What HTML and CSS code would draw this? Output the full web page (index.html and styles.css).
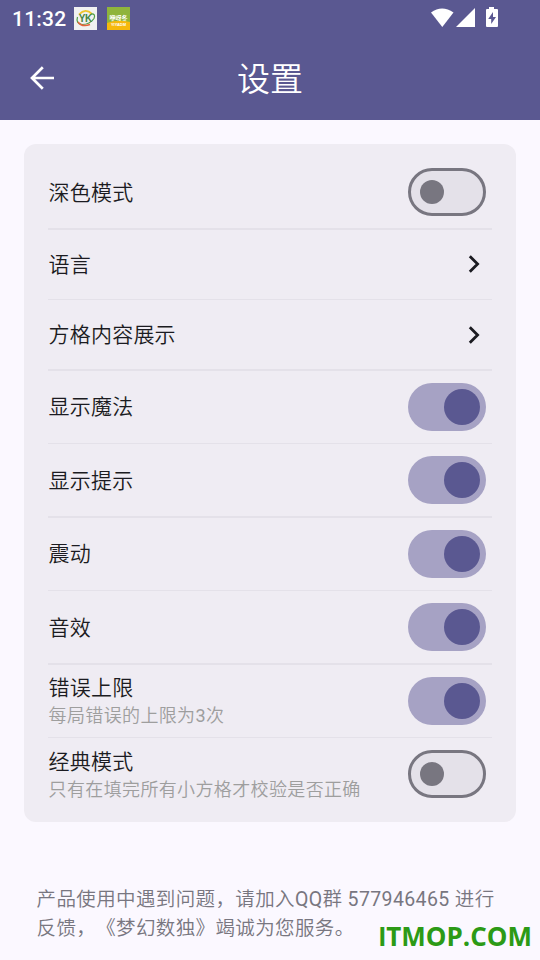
FILE: index.html
```html
<!DOCTYPE html>
<html lang="zh-CN">
<head>
<meta charset="utf-8">
<title>设置</title>
<link rel="stylesheet" href="styles.css">
</head>
<body>
<header class="top">
  <div class="status">
    <span class="clock">11:32</span>
    <svg class="app-icon" viewBox="0 0 23 23">
      <rect width="23" height="23" fill="#f1f1f1"/>
      <path d="M5 7.500Q11.500 .5 18 7" fill="none" stroke="#efc52b" stroke-width="1.800"/>
      <path d="M17 7Q22 6.500 20 11.500Q16 17.500 8 17.500Q1.500 16.500 3.500 10" fill="none" stroke="#4d9c43" stroke-width="1.200"/>
      <path d="M4 15Q8 20.500 16 17.500" fill="none" stroke="#e5633a" stroke-width="1.500"/>
      <text x="11.300" y="15" text-anchor="middle" class="yk-text">YK</text>
    </svg>
    <svg class="app-icon" viewBox="0 0 23 23">
      <rect width="23" height="23" fill="#8fb43c"/>
      <path d="M0 16Q10 12 23 15V23H0Z" fill="#f6b90c"/>
      <text x="11.500" y="13" text-anchor="middle" class="game-text">咿呀冬</text>
      <text x="11.500" y="19" text-anchor="middle" class="game-sub">YIYADM</text>
    </svg>
    <svg class="signals" viewBox="0 0 68 20" width="68" height="20">
      <path d="M0 4.600Q11 -3.600 22.500 4.600L11.300 19Z" fill="#fff"/>
      <path d="M44 0V19H25Z" fill="#fff"/>
      <path d="M58 -1h5v2h3q1 0 1 1V18q0 1-1 1h-10q-1 0-1-1V2q0-1 1-1h2Z" fill="#fff"/>
      <path d="M62 4L57.200 11h3v5l4.800-7h-3Z" fill="#5a5891"/>
    </svg>
  </div>
  <div class="bar">
    <svg class="back" viewBox="0 0 24 24"><path d="M24 12H2M12.800 1.200L2 12l10.800 10.800" fill="none" stroke="#fff" stroke-width="2.700"/></svg>
    <h1>设置</h1>
  </div>
</header>
<main class="card">
  <div class="row"><div class="label">深色模式</div><span class="switch"></span></div>
  <div class="row link"><div class="label">语言</div><svg class="chevron" viewBox="0 0 12 18"><path d="M1.800 1.200L9.600 9l-7.800 7.800" /></svg></div>
  <div class="row link"><div class="label">方格内容展示</div><svg class="chevron" viewBox="0 0 12 18"><path d="M1.800 1.200L9.600 9l-7.800 7.800" /></svg></div>
  <div class="row"><div class="label">显示魔法</div><span class="switch on"></span></div>
  <div class="row"><div class="label">显示提示</div><span class="switch on"></span></div>
  <div class="row"><div class="label">震动</div><span class="switch on"></span></div>
  <div class="row"><div class="label">音效</div><span class="switch on"></span></div>
  <div class="row"><div class="label">错误上限<p class="hint">每局错误的上限为<span class="latin">3</span>次</p></div><span class="switch on"></span></div>
  <div class="row"><div class="label">经典模式<p class="hint">只有在填完所有小方格才校验是否正确</p></div><span class="switch"></span></div>
</main>
<footer class="note">产品使用中遇到问题，请加入<span class="latin">QQ</span>群 <span class="latin">577946465</span> 进行<br>反馈，《梦幻数独》竭诚为您服务。</footer>
<div class="watermark"><span class="bar-i">I</span>TMOP.COM</div>
</body>
</html>
```

FILE: styles.css
```css
* { box-sizing: border-box; }

body {
  margin: 0;
  width: 540px;
  height: 960px;
  overflow: hidden;
  position: relative;
  background: #fbf8ff;
  color: #1b1b21;
  font-family: Roboto, "Noto Sans CJK SC", sans-serif;
  text-spacing-trim: space-all;
}

.top { height: 120px; background: #5a5891; color: #fff; }

.status { height: 36px; display: flex; align-items: center; padding: 0 41px 0 12px; }

.clock { width: 62px; font-size: 21px; font-weight: 500; letter-spacing: 0.2px; line-height: 36px; padding-top: 1px; }

.app-icon { width: 23px; height: 23px; margin-right: 10px; }

.yk-text { font: bold 10px "Liberation Sans", sans-serif; fill: #46863f; letter-spacing: -0.5px; }

.game-text { font: bold 6px "Noto Sans CJK SC", sans-serif; fill: #fff; }

.game-sub { font: bold 4px "Liberation Sans", sans-serif; fill: #fff; }

.signals { margin-left: auto; overflow: visible; }

.bar { height: 84px; display: grid; grid-template-columns: 60px 1fr 60px; align-items: center; }

.back { width: 24px; height: 24px; margin-left: 30px; }

h1 { margin: 0; padding-top: 3px; text-align: center; font-size: 33px; font-weight: 350; line-height: 48px; }

.card { margin: 24px 24px 0; height: 678px; padding: 12px 24px; background: #efecf3; border-radius: 12px; }

.row {
  height: 73.5px;
  display: flex;
  align-items: center;
  justify-content: space-between;
  padding: 0 6px 1.5px 0.6px;
  position: relative;
}

.row:not(:last-child)::after {
  content: "";
  position: absolute;
  left: 0;
  right: 0;
  bottom: 0;
  height: 1.5px;
  background: #e4e1e9;
}

.link { height: 70.5px; padding-right: 12px; }

.row:last-child { height: 72px; padding-bottom: 0; }

.label { font-size: 21px; font-weight: 350; letter-spacing: 0.2px; line-height: 30px; padding-top: 1px; }

.hint { margin: 0; font-size: 18px; line-height: 25px; letter-spacing: 0.36px; color: #9e9e9e; }

.row:has(.hint) .label { padding-top: 0; }

.latin { font-weight: 400; }

.switch {
  width: 78px;
  height: 48px;
  border: 3px solid #787680;
  border-radius: 24px;
  background: #e4e1e9;
  display: flex;
  align-items: center;
  padding-left: 9px;
}

.switch::before { content: ""; width: 24px; height: 24px; border-radius: 50%; background: #787680; }

.on { border: 0; background: #a6a2c4; padding-left: 36px; }

.on::before { width: 36px; height: 36px; background: #5a5891; }

.chevron { width: 12px; height: 18px; }

.chevron path { fill: none; stroke: #1b1b21; stroke-width: 2.8; }

.note {
  margin: 63px 30px 0 36.5px;
  font-size: 19.5px;
  font-weight: 350;
  line-height: 29px;
  letter-spacing: 0.38px;
  color: #787680;
  white-space: nowrap;
}

.watermark { position: absolute; right: 8px; bottom: 5px; font: 700 26px/36px "Open Sans", sans-serif; color: #2c9a16; }

.bar-i { font-family: Roboto, sans-serif; }
```
